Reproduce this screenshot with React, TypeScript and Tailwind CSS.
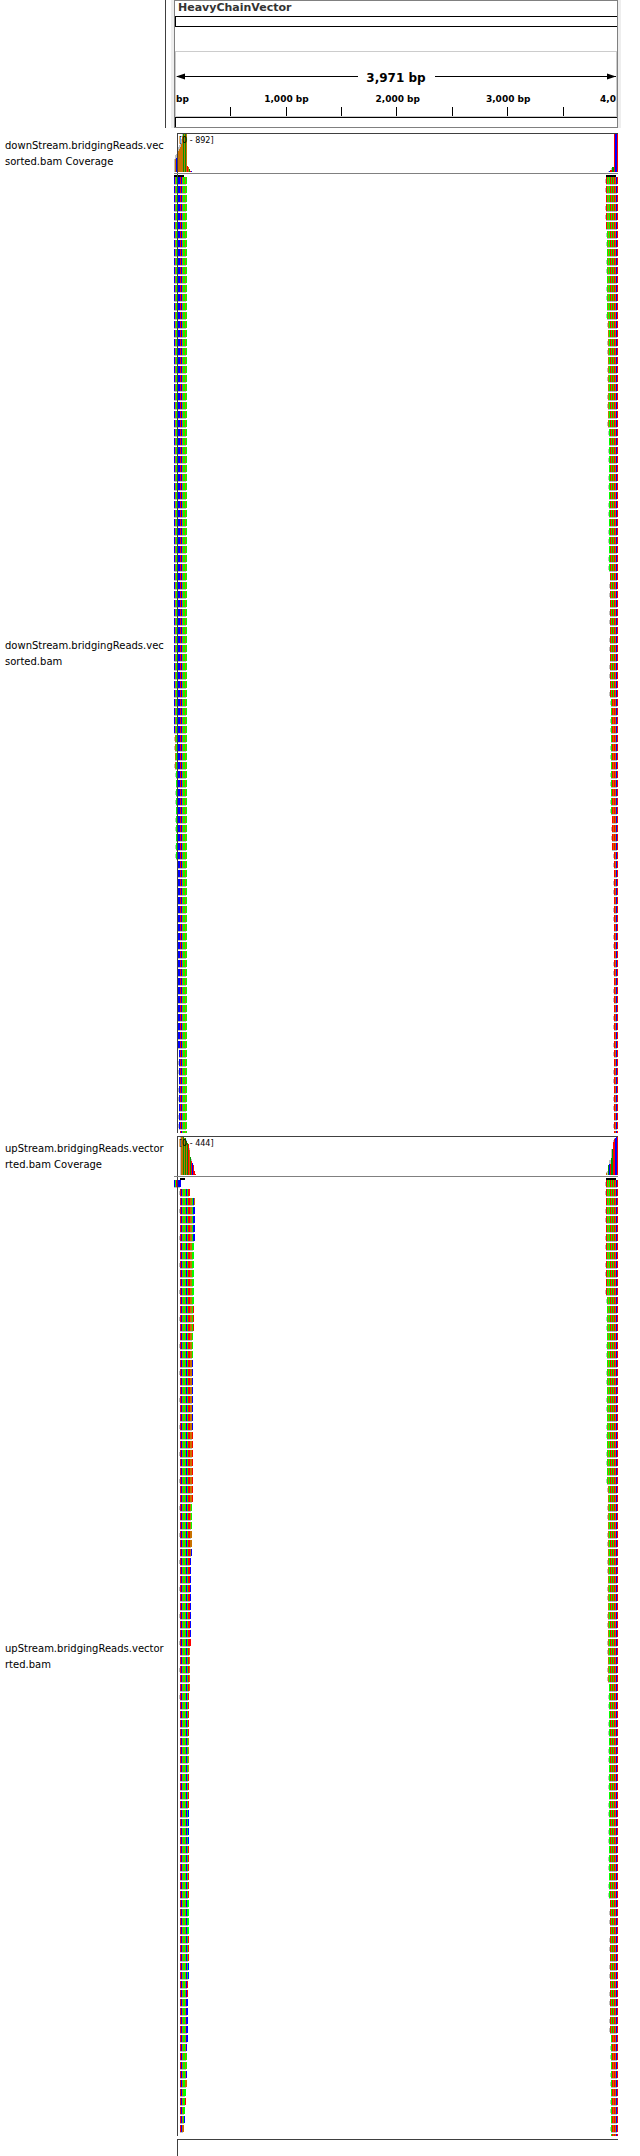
type Read = { start: number; bases: string; tag?: number };
type Bar = [x: number, height: number, base: string, cap?: number];

const COLORS: Record<string, string> = {
  R: "#ff0000",
  B: "#0000ff",
  G: "#00ff00",
  O: "#c87200",
  D: "#009600",
  N: "#bfbfbf",
};

const ROW = 9;
const READ = 7;
const ROWS = 106;

function pick(table: [number, number][], row: number) {
  let value = table[0][1];
  for (const [from, v] of table) if (row >= from) value = v;
  return value;
}

const DOWN_LEFT = "BOGGBBRBOGGOG";
const RIGHT_WIDE = "RGOGRGRGROBR";
const RIGHT_NARROW = "RGOORGRORORR";
const UP_LEFT = "RBOGGOBGRROOGO";

const UP_LEFT_ENDS: [row: number, length: number, base: string][] = [
  [2, 14, "BO"], [3, 14, "BB"], [7, 14, "G"], [14, 14, "R"], [17, 13, "G"], [20, 13, "B"], [28, 13, "R"],
  [36, 12, "G"], [39, 12, "O"], [41, 12, "B"], [42, 11, "B"], [51, 11, "R"], [52, 10, "O"], [57, 9, "R"],
  [62, 9, "O"], [66, 9, "R"], [70, 9, "B"], [74, 9, "R"], [80, 9, "G"], [84, 9, "R"], [87, 9, "B"], [89, 8, "R"],
  [91, 8, "B"], [96, 7, "B"], [97, 7, "G"], [99, 7, "B"], [100, 7, "O"], [101, 6, "G"], [102, 6, "R"],
  [103, 5, "G"], [104, 5, "B"], [105, 4, "O"],
];

function downLeft(row: number): Read {
  const start = pick([[0, 0], [62, 1], [66, 2], [76, 4], [97, 5], [106, 6]], row);
  return { start, bases: DOWN_LEFT.slice(start), tag: start > 0 && row % 3 !== 1 ? 1 : 0 };
}

function rightRead(start: number, row: number): Read {
  const bases = start < 5 ? RIGHT_WIDE : RIGHT_NARROW.slice(0, 10) + "BR";
  return { start: start + 12, bases: bases.slice(start), tag: row % 3 !== 2 ? 1 : 0 };
}

function downRight(row: number): Read {
  return rightRead(pick([[0, 0], [6, 1], [16, 2], [28, 3], [44, 4], [58, 5], [71, 6], [75, 8]], row), row);
}

function upRight(row: number): Read {
  return rightRead(pick([[0, 0], [13, 1], [34, 2], [56, 3], [80, 4], [95, 5]], row), row);
}

function upLeft(row: number): Read {
  if (row === 0) return { start: 0, bases: "BGRGBBB" };
  if (row === 1) return { start: 6, bases: UP_LEFT.slice(0, 10), tag: 1 };
  if (row === ROWS) return { start: 6, bases: "" };
  let end = UP_LEFT_ENDS[0];
  for (const entry of UP_LEFT_ENDS) if (row >= entry[0]) end = entry;
  return { start: 6, bases: UP_LEFT.slice(0, end[1] - 1) + end[2], tag: row % 3 === 0 && row < 60 ? 1 : 0 };
}

function readPaths(layout: (row: number) => Read) {
  const paths: Record<string, string> = {};
  const add = (base: string, x: number, y: number, w: number, h: number) => {
    paths[base] = (paths[base] ?? "") + `M${x} ${y}h${w}v${h}h${-w}z`;
  };
  for (let row = 0; row <= ROWS; row++) {
    const { start, bases, tag } = layout(row);
    if (!bases) continue;
    const y = row * ROW;
    const height = row === ROWS ? 2 : READ;
    bases.split("").forEach((base, i) => add(base, start + i, y, 1, height));
    if (row < ROWS) add("N", start, y + READ, bases.length - 1, 1);
    if (tag && row < ROWS) add("N", start - tag, y + 2, tag, 4);
  }
  return paths;
}

function Reads({ layout, marker, axis }: { layout: (row: number) => Read; marker: [number, number]; axis?: boolean }) {
  const paths = readPaths(layout);
  return (
    <svg width="24" height="959" shapeRendering="crispEdges" className="block" aria-hidden="true">
      <g transform="translate(0 3)">
        {Object.entries(paths).map(([base, d]) => (
          <path key={base} d={d} fill={COLORS[base]} />
        ))}
      </g>
      <rect x={marker[0]} y="1" width={marker[1]} height="2" fill="#000" />
      {axis && <rect x="3" y="0" width="1" height="959" fill="#404040" />}
    </svg>
  );
}

function Bars({ bars, axis }: { bars: Bar[]; axis?: boolean }) {
  return (
    <svg width="24" height="40" shapeRendering="crispEdges" className="block" aria-hidden="true">
      {bars.map(([x, h, base, cap = 0]) => (
        <g key={x}>
          {cap > 0 && <rect x={x} y={39 - h - cap} width="1" height={cap} fill={COLORS.N} />}
          <rect x={x} y={39 - h} width="1" height={h} fill={COLORS[base]} />
        </g>
      ))}
      {axis ? <path d="M3 40V0h21v1H4v39z" fill="#404040" /> : <rect width="24" height="1" fill="#404040" />}
    </svg>
  );
}

const DOWN_COVER_LEFT: Bar[] = [
  [0, 13, "N"], [1, 13, "O", 4], [2, 14, "B", 4], [3, 20, "O"], [4, 21, "O", 4], [5, 23, "O", 4], [6, 25, "O", 4],
  [7, 28, "O", 5], [8, 36, "O", 2], [9, 38, "D"], [10, 38, "O"], [11, 38, "D"], [12, 38, "O"],
  [13, 6, "R"], [14, 5, "O"], [15, 3, "D"], [16, 1, "R"], [17, 1, "B"],
];
const DOWN_COVER_RIGHT: Bar[] = [
  [14, 1, "N"], [15, 1, "B"], [16, 2, "R"], [17, 2, "R", 2], [18, 5, "D"], [19, 5, "D"],
  [20, 38, "R"], [21, 38, "B"], [22, 38, "B"], [23, 38, "R"],
];
const UP_COVER_LEFT: Bar[] = [
  [6, 38, "N"], [7, 38, "O"], [8, 38, "O"], [9, 38, "D"], [10, 37, "O"], [11, 37, "D"], [12, 34, "O"],
  [13, 32, "D"], [14, 31, "R"], [15, 25, "O", 2], [16, 18, "D"], [17, 14, "R", 2], [18, 12, "B"], [19, 10, "R"],
  [20, 4, "R"], [21, 1, "R"],
];
const UP_COVER_RIGHT: Bar[] = [
  [12, 2, "O", 1], [13, 4, "N"], [14, 10, "D"], [15, 11, "B", 4], [16, 11, "R", 4], [17, 17, "D", 9], [18, 26, "D"],
  [19, 33, "R", 2], [20, 36, "R", 1], [21, 37, "B"], [22, 38, "B"], [23, 38, "R"],
];

function TrackLabel({ lines }: { lines: [string, string] }) {
  return (
    <div className="w-[174px] shrink-0 self-center pl-[5px] text-[10px] leading-4 whitespace-nowrap">
      {lines[0]}
      <br />
      {lines[1]}
    </div>
  );
}

type TrackProps = {
  name: [string, string];
  range: string;
  left: Bar[];
  right: Bar[];
  leftReads: (row: number) => Read;
  rightReads: (row: number) => Read;
  leftMarker: [number, number];
  rightMarker: [number, number];
};

function Track({ name, range, left, right, leftReads, rightReads, leftMarker, rightMarker }: TrackProps) {
  return (
    <section>
      <div className="flex">
        <TrackLabel lines={[name[0], `${name[1]} Coverage`]} />
        <div className="relative flex grow border-b border-[#808080]">
          <Bars bars={left} axis />
          <div className="grow border-t border-[#404040]" />
          <Bars bars={right} />
          <span className="absolute top-[2px] left-[5px] text-[8px] leading-3">{range}</span>
        </div>
        <div className="w-[22px] shrink-0" />
      </div>
      <div className="flex">
        <TrackLabel lines={name} />
        <div className="flex grow justify-between">
          <Reads layout={leftReads} marker={leftMarker} axis />
          <Reads layout={rightReads} marker={rightMarker} />
        </div>
        <div className="w-[22px] shrink-0" />
      </div>
    </section>
  );
}

function Ruler() {
  const labels: [string, string][] = [
    ["1,000 bp", "25.1%"], ["2,000 bp", "50.4%"], ["3,000 bp", "75.5%"],
  ];
  const ticks = ["12.4%", "25.1%", "37.6%", "50.2%", "62.9%", "75.3%", "88.1%"];
  return (
    <svg width="100%" height="64" className="block overflow-hidden font-bold" role="img" aria-label="Ruler, 3,971 bp">
      <g shapeRendering="crispEdges" stroke="#000">
        <line x1="1" x2="41.3%" y1="24.5" y2="24.5" />
        <line x1="58.8%" x2="100%" y1="24.5" y2="24.5" />
        {ticks.map((x) => (
          <line key={x} x1={x} x2={x} y1="55" y2="64" />
        ))}
      </g>
      <path d="M0 24.5l9-3v6z" />
      <svg x="100%" width="10" height="64" overflow="visible">
        <path d="M0 24.5l-9-3v6z" />
      </svg>
      <text x="50%" y="30" textAnchor="middle" fontSize="12">3,971 bp</text>
      <text x="0" y="50" fontSize="9">bp</text>
      {labels.map(([label, x]) => (
        <text key={label} x={x} y="50" textAnchor="middle" fontSize="9">{label}</text>
      ))}
      <text x="100%" y="50" textAnchor="end" fontSize="9">4,0</text>
    </svg>
  );
}

export default function App() {
  return (
    <main className="min-h-screen bg-white font-['DejaVu_Sans',sans-serif] text-black">
      <header className="flex h-32">
        <div className="w-[166px] shrink-0 border-r border-[#404040]" />
        <div className="ml-[5px] w-[3px] shrink-0 bg-[#eeeeee]" />
        <div className="flex min-w-0 grow flex-col border border-[#808080]">
          <h1 className="h-[15px] pl-[3px] text-[11px] leading-[14px] font-bold text-[#333333]">HeavyChainVector</h1>
          <div className="h-[11px] border-y border-l border-black" />
          <div className="mt-6 h-[66px] border border-[#cccccc]">
            <Ruler />
          </div>
          <div className="grow border-t border-l border-black" />
        </div>
        <div className="w-[22px] shrink-0 border-l-[3px] border-[#eeeeee]" />
      </header>
      <div className="flex flex-col gap-[3px] pt-[5px]">
        <Track
          name={["downStream.bridgingReads.vec", "sorted.bam"]}
          range="[0 - 892]"
          left={DOWN_COVER_LEFT}
          right={DOWN_COVER_RIGHT}
          leftReads={downLeft}
          rightReads={downRight}
          leftMarker={[0, 10]}
          rightMarker={[12, 10]}
        />
        <Track
          name={["upStream.bridgingReads.vector", "rted.bam"]}
          range="[0 - 444]"
          left={UP_COVER_LEFT}
          right={UP_COVER_RIGHT}
          leftReads={upLeft}
          rightReads={upRight}
          leftMarker={[6, 5]}
          rightMarker={[12, 10]}
        />
        <div className="mr-[22px] ml-[177px] h-[17px] border-t border-l border-[#404040]" />
      </div>
    </main>
  );
}
